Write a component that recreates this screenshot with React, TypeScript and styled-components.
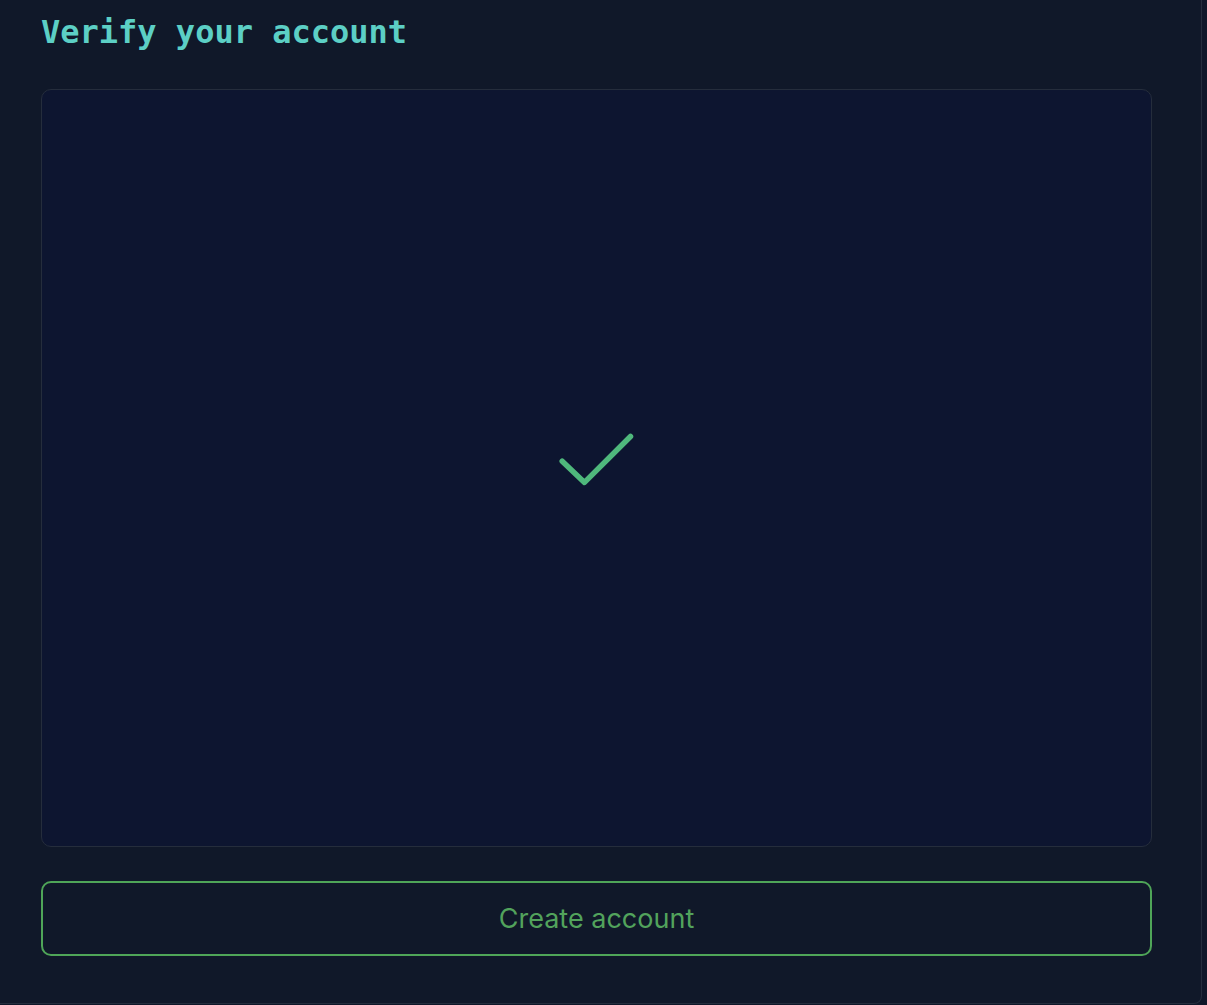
import React from 'react'
import styled, { createGlobalStyle } from 'styled-components'

const GlobalStyle = createGlobalStyle`
  html, body {
    margin: 0;
    padding: 0;
    background: #0f1729;
  }
  body {
    font-family: Inter, "Noto Sans", sans-serif;
  }
`

const App = () => {
  return (
    <>
      <GlobalStyle />
      <Panel>
        <Title>Verify your account</Title>
        <Frame>
          <Check width="80" height="80" viewBox="0 0 80 80" aria-hidden="true">
            <polyline points="5.2,33.2 27.5,54.4 73.5,8.5" />
          </Check>
        </Frame>
        <CreateButton type="button">Create account</CreateButton>
      </Panel>
    </>
  )
}

export default App

const Panel = styled.div`
  width: 1202px;
  box-sizing: border-box;
  display: flex;
  flex-direction: column;
  padding: 12px 49px 47px 41px;
  background: #101829;
  border-right: 1px solid #242d3d;
  border-bottom: 1px solid #242d3d;
  border-bottom-right-radius: 8px;
`

const Title = styled.h1`
  margin: 0 0 37px;
  font-family: "DejaVu Sans Mono", "Liberation Mono", monospace;
  font-weight: bold;
  font-size: 32px;
  line-height: 40px;
  color: #5ccfc5;
`

const Frame = styled.div`
  height: 758px;
  box-sizing: border-box;
  display: flex;
  align-items: center;
  justify-content: center;
  background: #0d1530;
  border: 1px solid #252d3c;
  border-radius: 10px;
`

const Check = styled.svg`
  fill: none;
  stroke: #4fb87c;
  stroke-width: 5.5;
  stroke-linecap: round;
  stroke-linejoin: round;
`

const CreateButton = styled.button`
  margin-top: 34px;
  height: 75px;
  box-sizing: border-box;
  background: transparent;
  border: 2px solid #4fa558;
  border-radius: 10px;
  color: #52a35c;
  font-family: Inter, "Noto Sans", sans-serif;
  font-size: 27px;
  cursor: pointer;
`
